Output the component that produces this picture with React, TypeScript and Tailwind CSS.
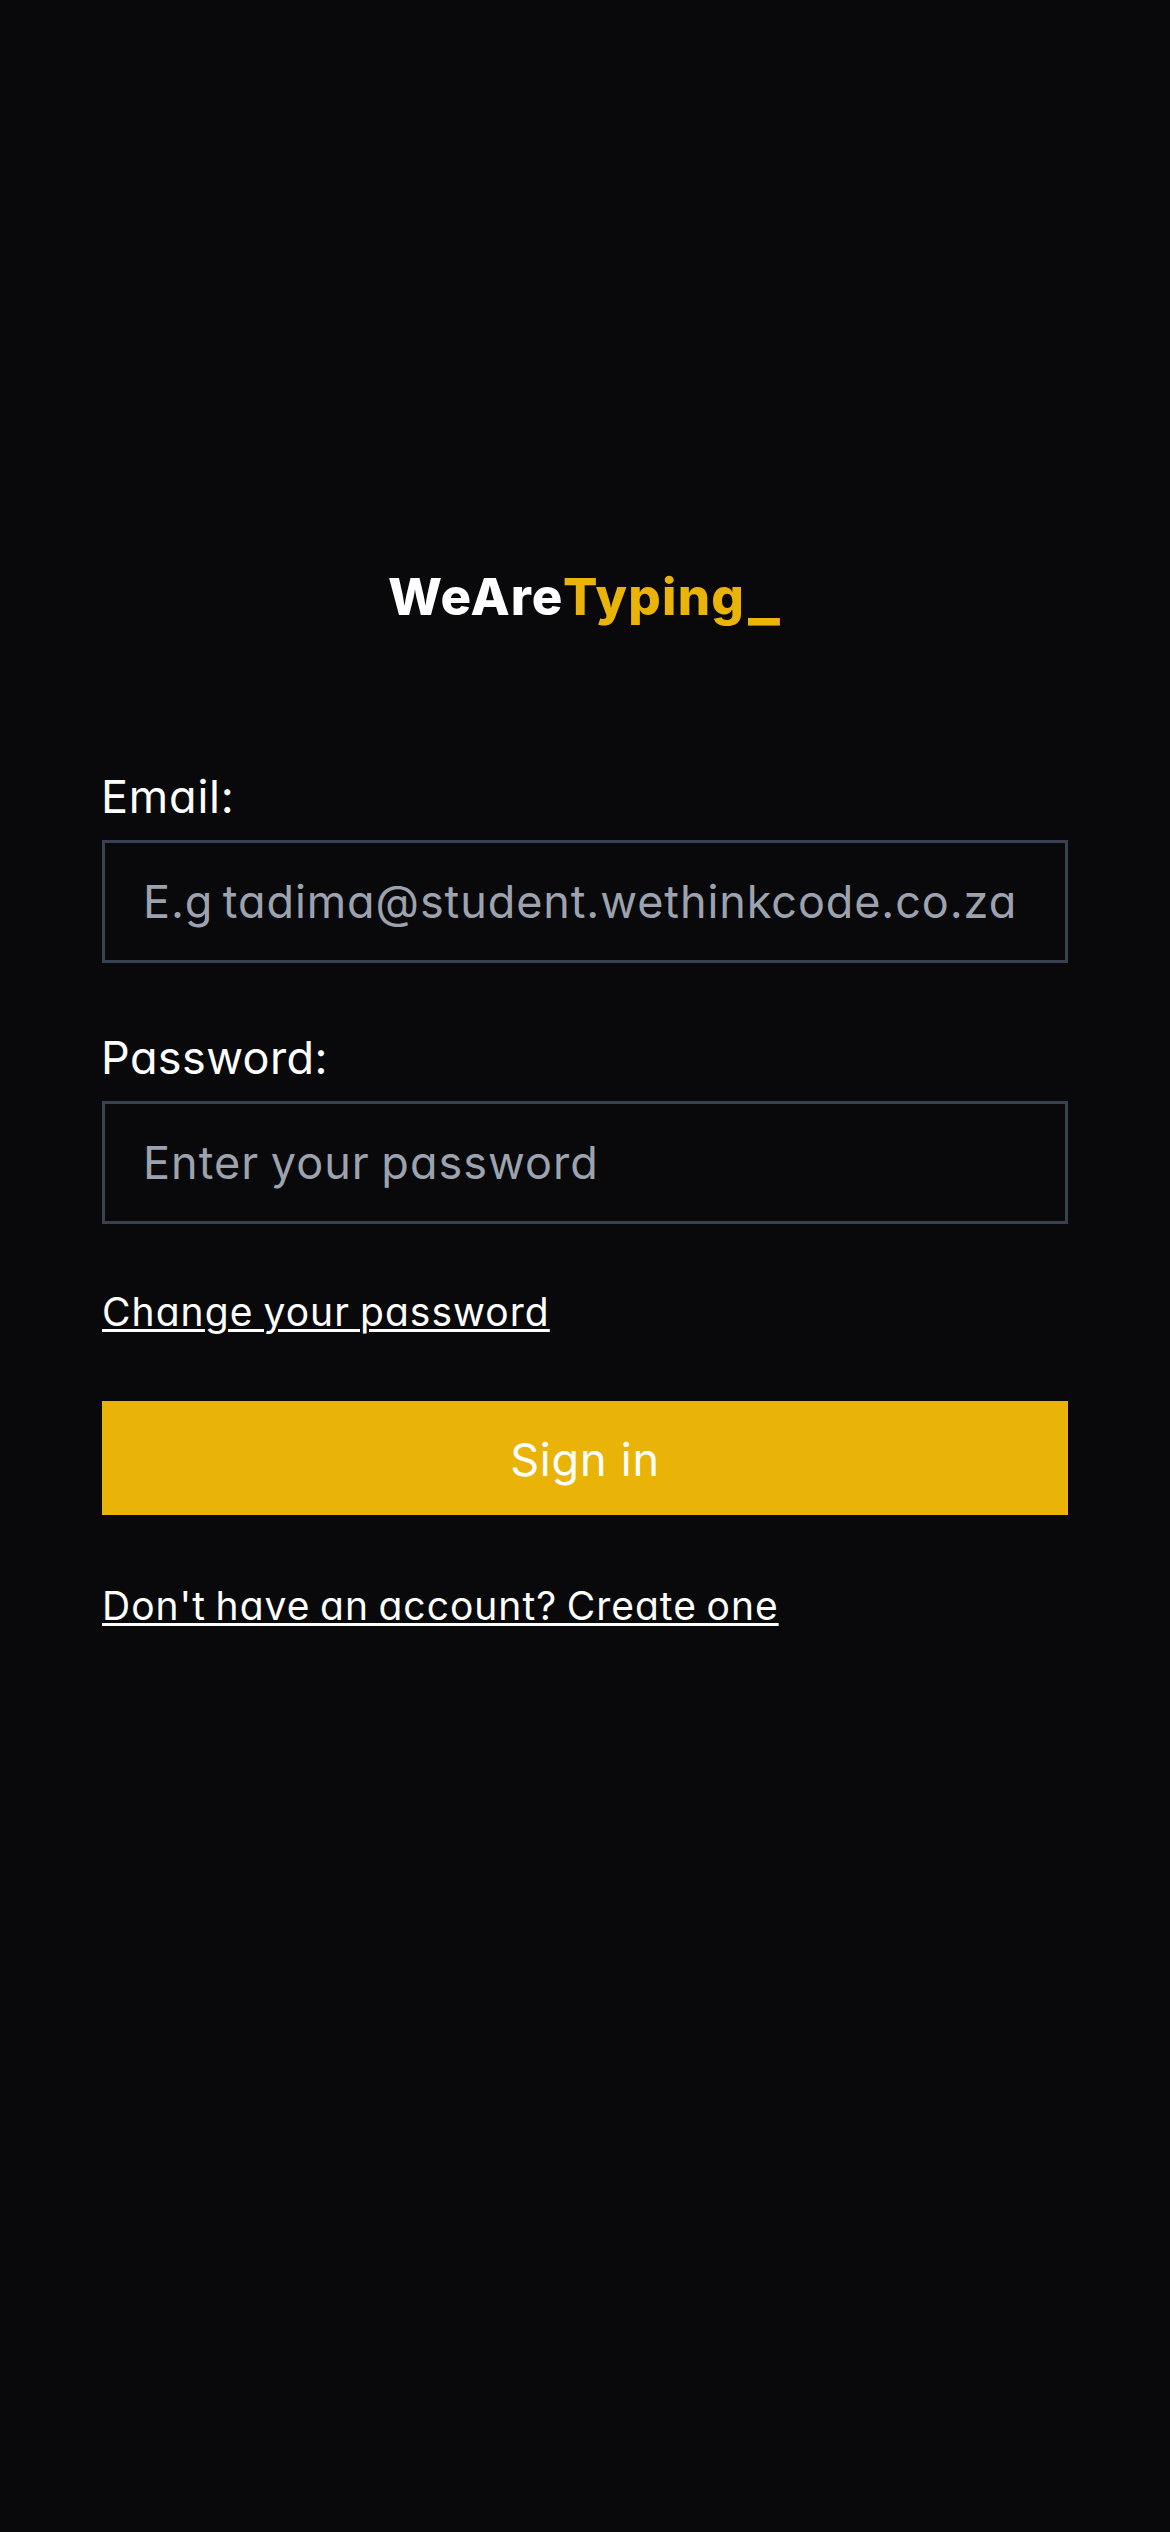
import type { ReactNode } from "react";

type FieldProps = {
  id: string;
  label: string;
  type: string;
  placeholder: string;
  labelClass: string;
  inputClass: string;
  className?: string;
};

function Field({ id, label, type, placeholder, labelClass, inputClass, className = "" }: FieldProps) {
  return (
    <div className={`flex flex-col ${className}`}>
      <label htmlFor={id} className={`-ml-px mb-[9px] h-[68px] text-[45px] leading-[68px] ${labelClass}`}>
        {label}
      </label>
      <input
        id={id}
        type={type}
        placeholder={placeholder}
        className={`h-[123px] w-full border-[3px] border-[#374151] bg-transparent px-[38px] text-[45px] text-white outline-none placeholder:text-[#9ca3af] ${inputClass}`}
      />
    </div>
  );
}

function TextLink({ children, className }: { children: ReactNode; className: string }) {
  return (
    <a
      href="#"
      className={`h-14 self-start text-[39px] leading-[56px] whitespace-nowrap underline decoration-[3px] underline-offset-[3px] ${className}`}
    >
      {children}
    </a>
  );
}

export default function App() {
  return (
    <main className="flex min-h-screen flex-col bg-[#09090b] px-[102px] pt-[559px] font-['Inter',sans-serif] text-white [font-feature-settings:'cv11']">
      <h1 className="flex h-[75px] justify-center pr-[2px] text-[51px] leading-[76px] font-extrabold">
        <span className="w-[175px] tracking-[1px]">WeAre</span>
        <span className="w-[185px] tracking-[1.2px] text-[#eab308]">Typing</span>
        <span className="text-[67px] leading-[69px] font-bold text-[#eab308]">_</span>
      </h1>

      <form className="mt-[129px] flex flex-col" onSubmit={(e) => e.preventDefault()}>
        <Field
          id="email"
          label="Email:"
          type="email"
          placeholder="E.g tadima@student.wethinkcode.co.za"
          labelClass="tracking-[0.8px]"
          inputClass="tracking-[0.9px] [word-spacing:-4px]"
        />
        <Field
          id="password"
          label="Password:"
          type="password"
          placeholder="Enter your password"
          labelClass="tracking-[0.4px]"
          inputClass="tracking-[1px] [word-spacing:-2px]"
          className="mt-[61px]"
        />
        <TextLink className="mt-[60px] tracking-[1.05px] [word-spacing:-2px]">Change your password</TextLink>
        <button
          type="submit"
          className="mt-[61px] h-[114px] w-full bg-[#eab308] pt-[3px] text-[45px] tracking-[0.8px] text-white"
        >
          Sign in
        </button>
        <TextLink className="mt-[63px] tracking-[1px] [word-spacing:-2.4px]">Don't have an account? Create one</TextLink>
      </form>
    </main>
  );
}
